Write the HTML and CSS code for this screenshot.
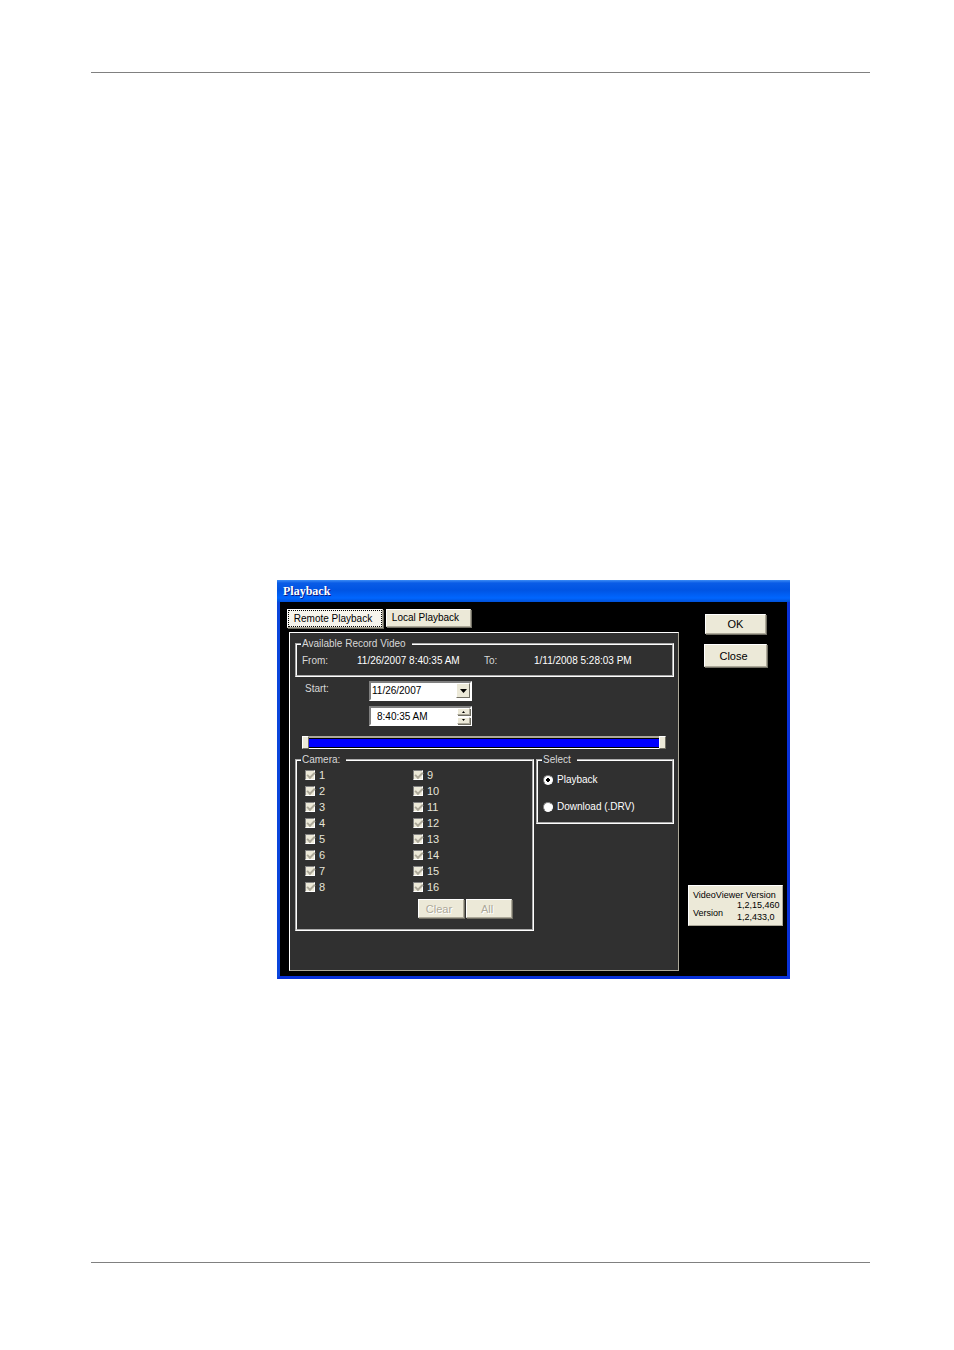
FILE: index.html
```html
<!DOCTYPE html>
<html lang="en">

<head>
  <meta charset="UTF-8">
  <meta name="viewport" content="width=device-width, initial-scale=1.0">
  <title>Playback</title>
  <link rel="stylesheet" href="styles.css">
</head>

<body>
  <main class="page">
    <form class="window">
      <h1 class="title">Playback</h1>
      <div class="content">
        <div class="left">
          <div class="tabs">
            <button type="button" class="btn tab active">Remote Playback</button>
            <button type="button" class="btn tab">Local Playback</button>
          </div>

          <div class="panel">
            <fieldset class="group available">
              <legend>Available Record Video</legend>
              <div class="range-text">
                <span>From:</span>
                <span class="date">11/26/2007 8:40:35 AM</span>
                <span>To:</span>
                <span class="date">1/11/2008 5:28:03 PM</span>
              </div>
            </fieldset>

            <div class="start">
              <label for="date">Start:</label>
              <div class="field">
                <select id="date">
                  <option>11/26/2007</option>
                </select>
                <svg class="arrow" viewBox="0 0 12 13" aria-hidden="true"><path d="M3 5h7L6.500 9z" /></svg>
              </div>
              <div class="field time">
                <input type="text" id="time" aria-label="Start time" value="8:40:35 AM">
                <div class="spin">
                  <button type="button" class="btn" aria-label="Later"><svg viewBox="0 0 5 3"><path d="M1 3h3L2.500 1z" /></svg></button>
                  <button type="button" class="btn" aria-label="Earlier"><svg viewBox="0 0 5 3"><path d="M1 0h3L2.500 2z" /></svg></button>
                </div>
              </div>
            </div>

            <div class="slider">
              <input type="range" min="0" max="100" value="0" aria-label="Range start">
              <input type="range" min="0" max="100" value="100" aria-label="Range end">
            </div>

            <div class="groups">
              <fieldset class="group camera">
                <legend>Camera:</legend>
                <div class="checks">
                  <label><input type="checkbox" checked disabled>1</label>
                  <label><input type="checkbox" checked disabled>2</label>
                  <label><input type="checkbox" checked disabled>3</label>
                  <label><input type="checkbox" checked disabled>4</label>
                  <label><input type="checkbox" checked disabled>5</label>
                  <label><input type="checkbox" checked disabled>6</label>
                  <label><input type="checkbox" checked disabled>7</label>
                  <label><input type="checkbox" checked disabled>8</label>
                  <label><input type="checkbox" checked disabled>9</label>
                  <label><input type="checkbox" checked disabled>10</label>
                  <label><input type="checkbox" checked disabled>11</label>
                  <label><input type="checkbox" checked disabled>12</label>
                  <label><input type="checkbox" checked disabled>13</label>
                  <label><input type="checkbox" checked disabled>14</label>
                  <label><input type="checkbox" checked disabled>15</label>
                  <label><input type="checkbox" checked disabled>16</label>
                </div>
                <div class="actions">
                  <button type="button" class="btn" disabled>Clear</button>
                  <button type="button" class="btn" disabled>All</button>
                </div>
              </fieldset>

              <fieldset class="group select">
                <legend>Select</legend>
                <label><input type="radio" name="mode" checked>Playback</label>
                <label><input type="radio" name="mode">Download (.DRV)</label>
              </fieldset>
            </div>
          </div>
        </div>

        <div class="right">
          <button type="button" class="btn ok">OK</button>
          <button type="button" class="btn close">Close</button>
          <dl class="version">
            <dt>VideoViewer Version</dt>
            <dd>1,2,15,460</dd>
            <dt>Version</dt>
            <dd>1,2,433,0</dd>
          </dl>
        </div>
      </div>
    </form>
  </main>
</body>

</html>
```

FILE: styles.css
```css
* {
  box-sizing: border-box;
}

body {
  margin: 0;
  padding: 72px 84px 87px 91px;
  min-height: 100vh;
  display: flex;
  background: #fff;
  font: 11px/14px "Liberation Sans", Arial, sans-serif;
}

button,
input,
select {
  margin: 0;
  font: inherit;
}

.page {
  flex: 1;
  padding: 507px 80px 0 186px;
  border-top: 1px solid #808080;
  border-bottom: 1px solid #808080;
}

/* window */
.window {
  border: 3px solid #0a46dc;
  border-top: 0;
  border-right-color: #0831d9;
  border-bottom-color: #0831d9;
  background: #000;
}

.title {
  margin: 0 -3px;
  padding: 1px 6px 0;
  height: 22px;
  background: linear-gradient(#3c8cf5 0, #0a5ce6 3px, #0054e3 10px, #0066ff 18px, #0050d8 22px);
  color: #fff;
  font: bold 12px/21px "Liberation Serif", serif;
  text-shadow: 1px 1px #0a1883;
}

.content {
  display: grid;
  grid-template-columns: 1fr 95px;
  gap: 9px;
  padding: 7px 4px 5px 7px;
}

.btn {
  padding: 0;
  border: 1px solid;
  border-color: #fff #aca899 #aca899 #fff;
  box-shadow: 1px 1px #716f64;
  background: #ece9d8;
  color: #000;
}

.btn:disabled {
  color: #aca899;
  text-shadow: 1px 1px #fff;
}

.tabs {
  display: flex;
  gap: 3px;
}

.tab {
  width: 85px;
  height: 18px;
  padding-right: 6px;
  font-size: 10px;
  white-space: nowrap;
}

.tab.active {
  width: 96px;
  height: 19px;
  padding-right: 4px;
  outline: 1px dotted #000;
  outline-offset: -2px;
  background: #f6f4ec;
}

/* panel */
.panel {
  margin: 4px 0 0 2px;
  padding: 4px 4px 39px 5px;
  border: 1px solid;
  border-color: #fff #aca899 #aca899 #fff;
  background: #303030;
  color: #fff;
  font-size: 10px;
}

.group {
  margin: 0;
  padding: 0;
  border: 2px groove #fff;
  min-width: 0;
}

.group legend {
  margin-left: 4px;
  padding: 0 6px 0 1px;
  color: #d8d8d8;
}

.range-text {
  display: grid;
  grid-template-columns: 55px 127px 50px 1fr;
  padding: 3px 5px 7px;
  color: #d8d8d8;
}

.date {
  color: #fff;
}

.start {
  display: grid;
  grid-template-columns: 64px 103px;
  gap: 5px 0;
  margin: 4px 0 10px 10px;
  color: #d8d8d8;
}

.start label {
  padding-top: 1px;
}

.field {
  position: relative;
  height: 20px;
  border: 2px solid;
  border-color: #808080 #fff #fff #808080;
  background: #fff;
}

.field select,
.field input {
  appearance: none;
  display: block;
  width: 100%;
  height: 16px;
  padding: 0 16px 0 1px;
  border: 0;
  background: none;
  color: #000;
}

.field input {
  padding-left: 6px;
}

.arrow {
  position: absolute;
  top: 0;
  right: 0;
  width: 14px;
  height: 15px;
  border: 1px solid;
  border-color: #fff #716f64 #716f64 #fff;
  background: #ece9d8;
  pointer-events: none;
}

.time {
  grid-column: 2;
}

.spin {
  position: absolute;
  top: 0;
  right: 0;
  display: grid;
  gap: 2px;
}

.spin .btn {
  display: flex;
  align-items: center;
  justify-content: center;
  width: 13px;
  height: 7px;
}

.spin svg {
  width: 5px;
  height: 3px;
}

/* two ranges share one bar, one thumb for each end */
.slider {
  display: grid;
  margin: 0 8px 4px 7px;
  height: 13px;
  border: solid;
  border-width: 2px 0 1px;
  border-color: #aca899 #fff #fff;
  background: #00f;
  box-shadow: inset 0 1px #000, inset 0 -1px #000;
}

.slider input {
  grid-area: 1 / 1;
  appearance: none;
  width: 100%;
  height: 13px;
  margin-top: -2px;
  background: none;
  pointer-events: none;
}

.slider input::-webkit-slider-thumb {
  appearance: none;
  width: 7px;
  height: 13px;
  border: 1px solid;
  border-color: #fff #716f64 #716f64 #fff;
  background: #ece9d8;
  pointer-events: auto;
}

.groups {
  display: grid;
  grid-template-columns: 239px 1fr;
  align-items: start;
  gap: 2px;
}

.checks {
  display: grid;
  grid-template-rows: repeat(8, 16px);
  grid-auto-flow: column;
  grid-template-columns: 108px 1fr;
  padding-left: 8px;
  font-size: 11px;
}

.checks label {
  display: flex;
  align-items: center;
  gap: 4px;
  color: #e6e4d8;
}

.checks input {
  appearance: none;
  width: 10px;
  height: 10px;
  border: 1px solid;
  border-color: #808080 #fff #fff #808080;
  background: #ece9d8;
}

.checks input:checked::after {
  content: "";
  display: block;
  width: 6px;
  height: 3px;
  margin: 1px;
  border: solid #aca899;
  border-width: 0 0 2px 2px;
  transform: rotate(-45deg);
}

.actions {
  display: flex;
  gap: 2px;
  margin: 4px 0 11px 121px;
  font-size: 11px;
}

.actions .btn {
  width: 46px;
  height: 19px;
  padding-right: 4px;
}

.select label {
  display: flex;
  align-items: center;
  gap: 4px;
  margin: 6px 5px 8px;
}

.select label + label {
  margin-top: 13px;
}

.select input {
  appearance: none;
  width: 10px;
  height: 10px;
  border: 1px solid;
  border-color: #808080 #fff #fff #808080;
  border-radius: 50%;
  background: #fff;
}

.select input:checked {
  background: radial-gradient(#000 0 2px, #fff 2px);
}

/* right column */
.right {
  display: flex;
  flex-direction: column;
  align-items: center;
  padding-top: 5px;
}

.ok {
  width: 61px;
  height: 20px;
}

.close {
  width: 63px;
  height: 23px;
  margin-top: 10px;
  padding-right: 4px;
}

.version {
  align-self: stretch;
  display: grid;
  grid-template-columns: 1fr 41px;
  align-items: center;
  margin: auto 0 45px;
  padding: 4px 4px 0;
  border: 1px solid;
  border-color: #fff #aca899 #aca899 #fff;
  background: #ece9d8;
  font-size: 9px;
  line-height: 10px;
}

.version dt:first-child {
  grid-column: 1 / 3;
}

.version dt:nth-of-type(2) {
  grid-area: 2 / 1 / 4 / 2;
}

.version dd {
  grid-column: 2;
  margin: 0;
  white-space: nowrap;
}

.version dd:last-child {
  line-height: 15px;
}
```
